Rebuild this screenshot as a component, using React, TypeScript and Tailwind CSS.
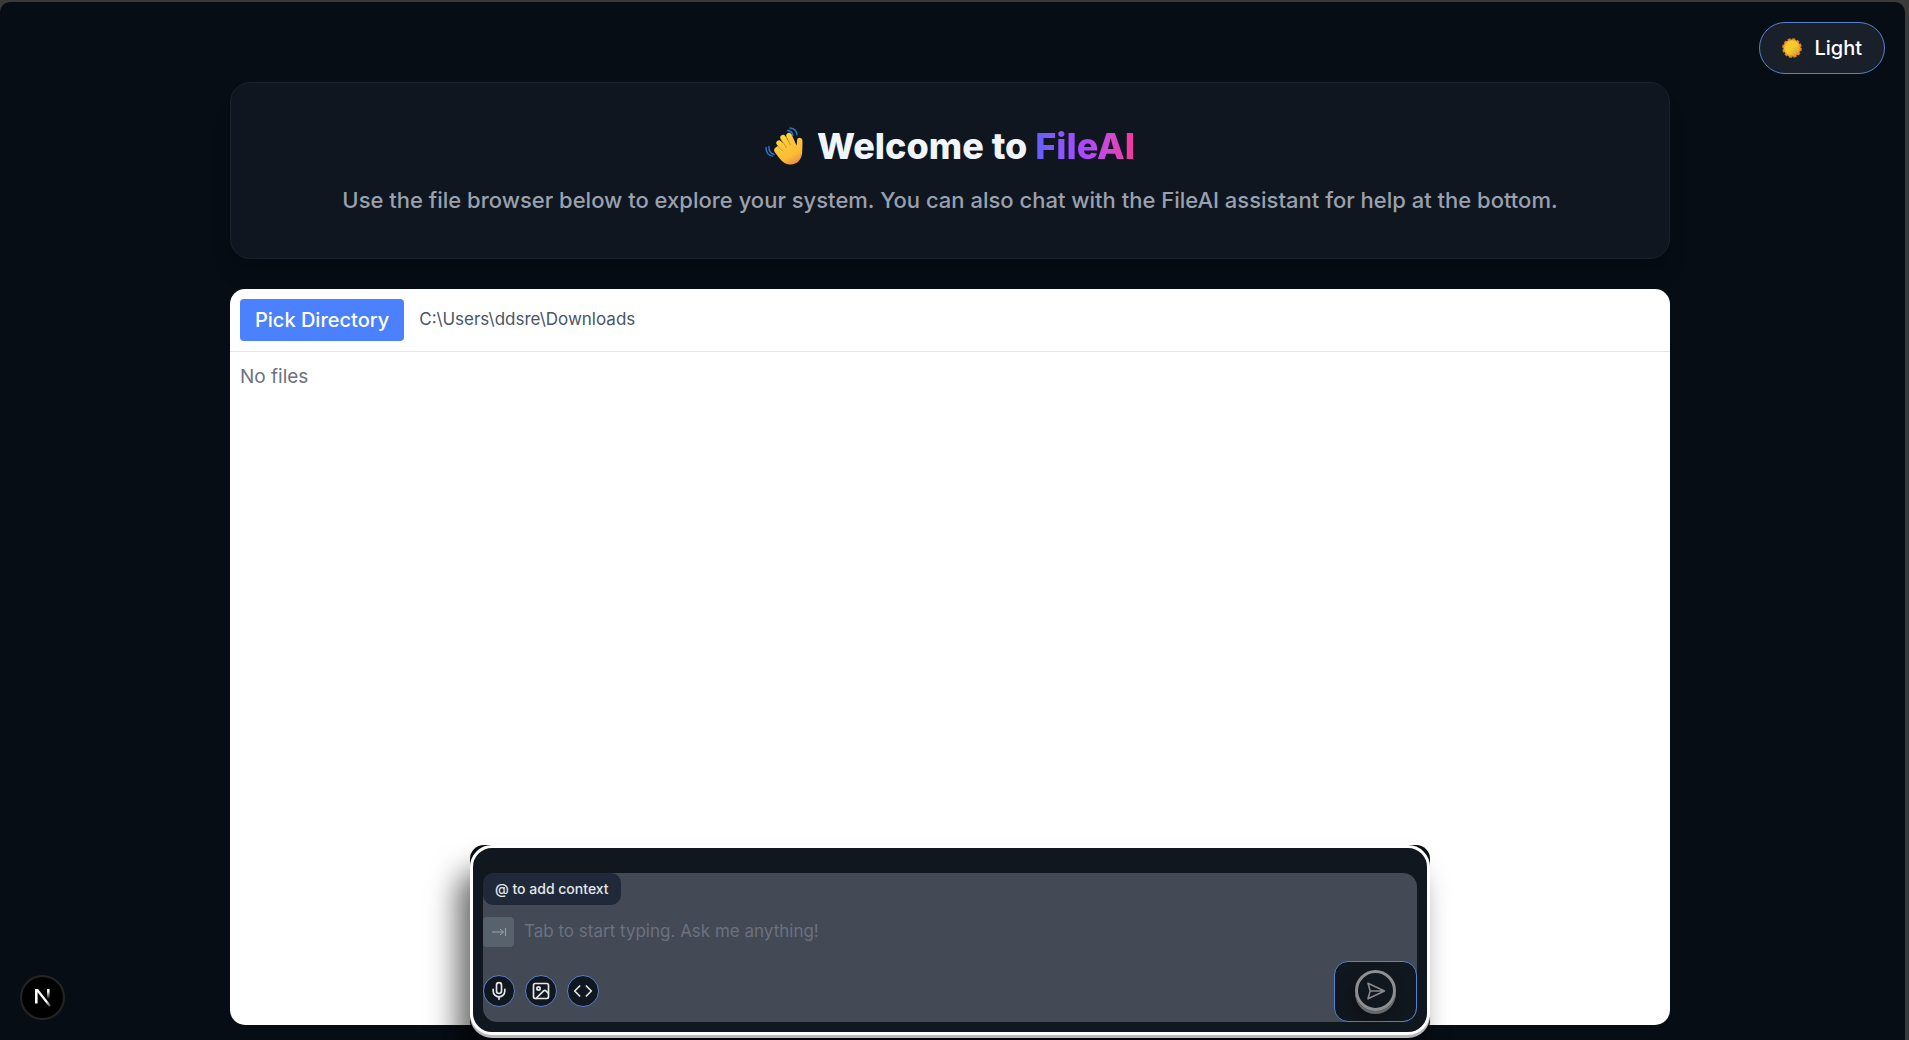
import { Code, Image, Mic } from "lucide-react";
import type { ReactNode } from "react";

function WavingHand() {
  return (
    <svg viewBox="0 0 38 38" className="size-[38px] shrink-0" aria-hidden="true">
      <defs>
        <linearGradient id="hand" x1="0" y1="0" x2="0.6" y2="1">
          <stop offset="0" stopColor="#ffd23c" />
          <stop offset="0.75" stopColor="#fbbc36" />
          <stop offset="1" stopColor="#ef9440" />
        </linearGradient>
      </defs>
      <g fill="none" stroke="#2b78c4" strokeWidth="1.4" strokeLinecap="round">
        <path d="M22.5 3.5c3 .2 5 2 5.4 5" />
        <path d="M25 1c4.2.3 6.6 3 7 6.8" />
        <path d="M4 19.5c-.4 4 1.4 6.8 5 8" />
        <path d="M1 20.5c0 4.6 2.3 7.6 6.2 8.7" />
      </g>
      <g stroke="url(#hand)" strokeWidth="5.4" strokeLinecap="round">
        <path d="M12.5 23.5 22 29" />
        <path d="M14 16l9 10" />
        <path d="M18 10.5l8 13" />
        <path d="M24 8.5l6 13" />
      </g>
      <path
        fill="url(#hand)"
        d="M10 21c-1.5 1.8-.8 3.6.6 5.2 3.8 4.6 7.4 10.8 13.6 11.3 7.5.8 12.8-5 13-12.5.1-4 .4-8 .2-11.4-.2-3.4-5-3.8-5.3-.4l-.4 5.3-5-5-9 2z"
      />
      <g fill="none" stroke="#e08a1e" strokeWidth="0.9" strokeLinecap="round">
        <path d="M12.5 19l5 5" />
        <path d="M16 12.5l5.5 8" />
        <path d="M21 9.5l4.5 8.5" />
      </g>
    </svg>
  );
}

function Sun() {
  return (
    <svg viewBox="0 0 20 20" className="size-5" aria-hidden="true">
      <defs>
        <linearGradient id="sun" x1="0" y1="0" x2="1" y2="1">
          <stop offset="0" stopColor="#fbc526" />
          <stop offset="0.5" stopColor="#f7cb2c" />
          <stop offset="1" stopColor="#d3912b" />
        </linearGradient>
      </defs>
      <circle cx="10" cy="10" r="8.8" fill="none" stroke="#e58a25" strokeWidth="2" strokeDasharray="3 1.6" />
      <circle cx="10" cy="10" r="8.8" fill="#e58a25" />
      <circle cx="10" cy="10" r="7.8" fill="url(#sun)" />
    </svg>
  );
}

function NextLogo() {
  return (
    <svg viewBox="0 0 16 18" fill="none" className="h-[18px] w-4" aria-hidden="true">
      <defs>
        <linearGradient id="stem" x1="0" y1="0" x2="0" y2="1">
          <stop offset="0.2" stopColor="#fff" />
          <stop offset="1" stopColor="#fff" stopOpacity="0" />
        </linearGradient>
        <linearGradient id="slash" x1="0" y1="0" x2="1" y2="1">
          <stop offset="0.7" stopColor="#fff" />
          <stop offset="1" stopColor="#fff" stopOpacity="0.1" />
        </linearGradient>
      </defs>
      <rect x="0" y="0" width="2.6" height="14.5" fill="#fff" />
      <path d="M0 0h3L16 16.6 14.2 18z" fill="url(#slash)" />
      <rect x="12" y="0" width="2.6" height="10" fill="url(#stem)" />
    </svg>
  );
}

interface ToolButtonProps {
  label: string;
  children: ReactNode;
}

function ToolButton({ label, children }: ToolButtonProps) {
  return (
    <button
      type="button"
      aria-label={label}
      className="flex size-8 items-center justify-center rounded-full border border-[#5b7fcc] bg-[#11171f] text-gray-200"
    >
      {children}
    </button>
  );
}

function ChatPanel() {
  return (
    <form className="pointer-events-auto w-full max-w-[960px] rounded-[14px] bg-[#060d15]">
      <div className="rounded-[22px] border-3 border-white bg-[#11171f] px-2.5 pt-[25px] pb-2.5 shadow-[0_3px_0_#b8b8b8,-12px_26px_30px_rgba(0,0,0,0.6)]">
        <div className="flex h-[149px] flex-col items-start rounded-[14px] bg-[#434955]">
          <button
            type="button"
            className="h-8 rounded-[10px] bg-[#20293a] px-3 text-sm font-medium text-gray-200"
          >
            @ to add context
          </button>
          <label className="mt-3 flex w-full items-center gap-2.5">
            <span className="flex h-[30px] w-[31px] items-center justify-center rounded-[4px] bg-[#58626d] text-gray-400">
              <svg viewBox="0 0 14 8" fill="none" stroke="currentColor" className="h-2 w-3.5" aria-hidden="true">
                <path d="M0 4h11.5M8 1l3.5 3L8 7M13.5 0v8" />
              </svg>
            </span>
            <input
              type="text"
              aria-label="Message"
              placeholder="Tab to start typing. Ask me anything!"
              className="min-w-0 flex-1 bg-transparent text-[17px] text-gray-200 outline-none placeholder:text-[#6b7280]"
            />
          </label>
          <div className="mt-auto flex w-full items-end justify-between">
            <div className="flex gap-2.5 pb-[15px]">
              <ToolButton label="Record voice">
                <Mic className="size-5" strokeWidth={2} />
              </ToolButton>
              <ToolButton label="Attach image">
                <Image className="size-5" strokeWidth={2} />
              </ToolButton>
              <ToolButton label="Insert code">
                <Code className="size-5" strokeWidth={2} />
              </ToolButton>
            </div>
            <button
              type="submit"
              aria-label="Send"
              className="flex h-[61px] w-[83px] items-center justify-center rounded-[14px] border border-[#5b7fcc] bg-[#11171f] pb-0.5"
            >
              <span className="flex size-[41px] items-center justify-center rounded-full border-3 border-[#8d8f92] text-[#85888e] shadow-[0_3px_0_#66686b,-4px_8px_16px_rgba(0,0,0,0.3)]">
                <svg
                  viewBox="0 0 20 20"
                  fill="none"
                  stroke="currentColor"
                  strokeWidth="1.6"
                  strokeLinejoin="round"
                  strokeLinecap="round"
                  className="size-5"
                  aria-hidden="true"
                >
                  <path d="M2 2.2 18.5 10 2 17.8 4.2 10zM4.2 10h14" />
                </svg>
              </span>
            </button>
          </div>
        </div>
      </div>
    </form>
  );
}

export default function App() {
  return (
    <div className="flex min-h-screen bg-[#3a3a3a] pt-0.5 pr-1 font-['Inter',sans-serif]">
      <div className="relative flex flex-1 flex-col rounded-t-[10px] bg-[#060d15] pr-[5px]">
        <button
          type="button"
          className="absolute top-5 right-5 flex h-[52px] items-center gap-3 rounded-full border border-[#5b7fcc] bg-[#1a202a] px-[22px] text-[20px] font-medium text-white"
        >
          <Sun />
          Light
        </button>

        <main className="mx-auto flex w-full max-w-[1440px] flex-1 flex-col gap-[30px] pt-20 pb-[15px]">
          <header className="flex h-[177px] flex-col items-center rounded-[20px] border border-[#1b222d] bg-[#0f161f] pt-10 text-center shadow-xl">
            <h1 className="flex items-center gap-3.5 text-[36px] leading-[46px] font-extrabold text-[#f0f4fc]">
              <WavingHand />
              <span>
                Welcome to{" "}
                <span className="bg-linear-to-r from-[#615fff] via-[#ad46ff] to-[#f6339a] bg-clip-text text-transparent">
                  FileAI
                </span>
              </span>
            </h1>
            <p className="mt-[15px] text-[22px] leading-8 font-medium text-[#99a1af]">
              Use the file browser below to explore your system. You can also chat with the FileAI assistant for help at the bottom.
            </p>
          </header>

          <section className="flex-1 overflow-hidden rounded-[15px] bg-white">
            <div className="flex items-center gap-[15px] border-b border-gray-200 p-2.5">
              <button
                type="button"
                className="h-[42px] rounded-[4px] bg-[#4b80ff] px-[15px] text-[20px] font-medium text-white"
              >
                Pick Directory
              </button>
              <span className="text-[17px] text-gray-600">C:\Users\ddsre\Downloads</span>
            </div>
            <p className="p-2.5 text-[19px] leading-[30px] text-gray-500">No files</p>
          </section>
        </main>

        <div className="pointer-events-none absolute inset-x-0 bottom-0 flex justify-center pr-[5px] pb-[5px]">
          <ChatPanel />
        </div>

        <button
          type="button"
          aria-label="Open dev tools"
          className="absolute bottom-5 left-5 flex size-[45px] items-center justify-center rounded-full border-2 border-[#252525] bg-black"
        >
          <NextLogo />
        </button>
      </div>
    </div>
  );
}
